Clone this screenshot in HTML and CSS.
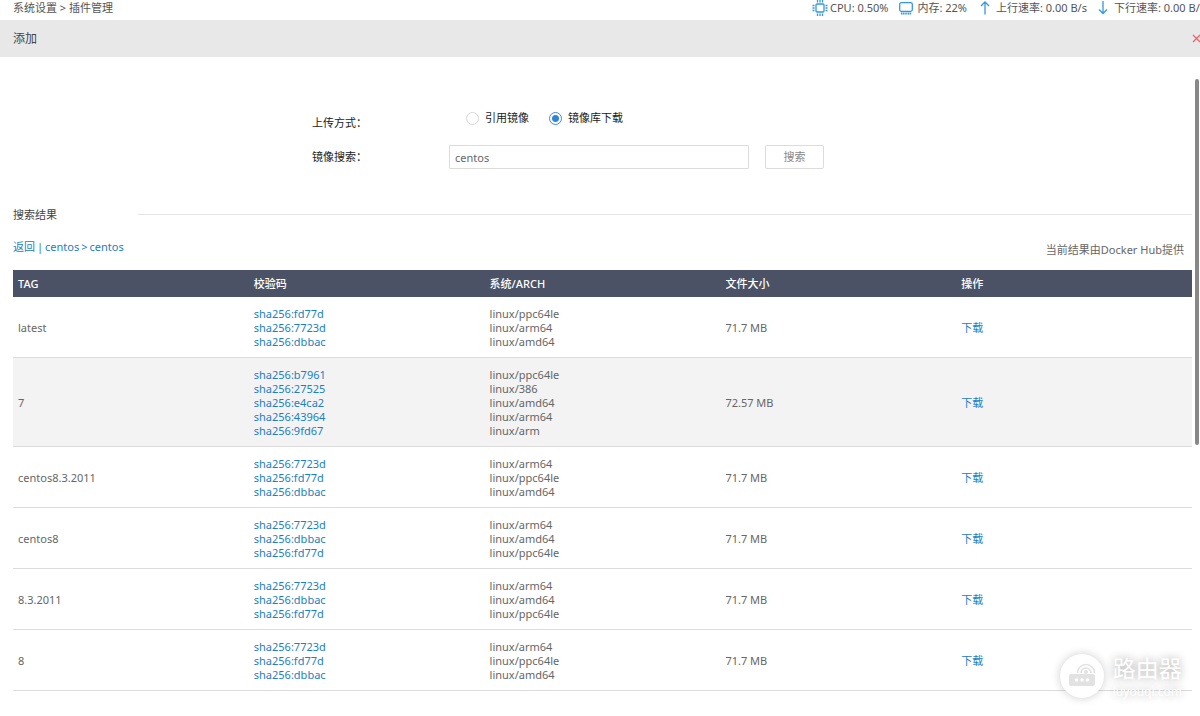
FILE: index.html
```html
<!DOCTYPE html>
<html lang="zh-CN">
<head>
<meta charset="utf-8">
<title>插件管理</title>
<link rel="stylesheet" href="styles.css">
</head>
<body>
<header class="topbar">
  <nav class="crumbs">系统设置 &gt; 插件管理</nav>
  <ul class="status">
    <li class="stat stat-cpu"><svg width="16" height="16" viewBox="0 0 16 16"><rect x="4" y="4" width="8" height="8" rx="1"/><path d="M5.500 0v2.500M8 0v2.500M10.500 0v2.500M5.500 13.500v2.500M8 13.500v2.500M10.500 13.500v2.500M0.500 5.500h2M0.500 8h2M0.500 10.500h2M13.500 5.500h2M13.500 8h2M13.500 10.500h2"/></svg>CPU: 0.50%</li>
    <li class="stat stat-mem"><svg width="14" height="14" viewBox="0 0 14 14"><rect x="0.700" y="1.700" width="12.600" height="8.600" rx="1.500"/><path d="M2.500 11.500v2M4.300 11.500v2M6.100 11.500v2M7.900 11.500v2M9.700 11.500v2M11.500 11.500v2"/></svg>内存: 22%</li>
    <li class="stat stat-up"><svg width="10" height="14" viewBox="0 0 10 14"><path d="M5 13.500V1M1 5l4-4 4 4"/></svg>上行速率: 0.00 B/s</li>
    <li class="stat stat-down"><svg width="10" height="14" viewBox="0 0 10 14"><path d="M5 0v12.500M1 8.500l4 4 4-4"/></svg>下行速率: 0.00 B/s</li>
  </ul>
</header>
<div class="titlebar">
  <h1 class="title">添加</h1>
  <button class="close" type="button" aria-label="关闭"><svg width="9" height="9" viewBox="0 0 9 9"><path d="M1 1l7 7M8 1l-7 7"/></svg></button>
</div>
<main class="panel">
  <form class="form">
    <div class="field" role="radiogroup" aria-labelledby="mode">
      <span class="label" id="mode">上传方式：</span>
      <div class="radios">
        <label class="choice"><input type="radio" name="mode">引用镜像</label>
        <label class="choice"><input type="radio" name="mode" checked>镜像库下载</label>
      </div>
    </div>
    <div class="field">
      <label class="label" for="q">镜像搜索：</label>
      <input class="text" id="q" type="text" value="centos">
      <button class="search" type="button">搜索</button>
    </div>
  </form>
  <div class="section"><h2 class="section-title">搜索结果</h2><div class="rule"></div></div>
  <div class="path">
    <div class="path-links"><a href="#">返回</a><span>|</span><a href="#">centos</a><span>&gt;</span><a href="#">centos</a></div>
    <div class="source">当前结果由Docker Hub提供</div>
  </div>
  <table class="tags">
    <thead><tr><th>TAG</th><th>校验码</th><th>系统/ARCH</th><th>文件大小</th><th>操作</th></tr></thead>
    <tbody>
      <tr><td>latest</td><td><a href="#">sha256:fd77d</a><a href="#">sha256:7723d</a><a href="#">sha256:dbbac</a></td><td>linux/ppc64le<br>linux/arm64<br>linux/amd64</td><td>71.7 MB</td><td><a href="#">下载</a></td></tr>
      <tr class="active"><td>7</td><td><a href="#">sha256:b7961</a><a href="#">sha256:27525</a><a href="#">sha256:e4ca2</a><a href="#">sha256:43964</a><a href="#">sha256:9fd67</a></td><td>linux/ppc64le<br>linux/386<br>linux/amd64<br>linux/arm64<br>linux/arm</td><td>72.57 MB</td><td><a href="#">下载</a></td></tr>
      <tr><td>centos8.3.2011</td><td><a href="#">sha256:7723d</a><a href="#">sha256:fd77d</a><a href="#">sha256:dbbac</a></td><td>linux/arm64<br>linux/ppc64le<br>linux/amd64</td><td>71.7 MB</td><td><a href="#">下载</a></td></tr>
      <tr><td>centos8</td><td><a href="#">sha256:7723d</a><a href="#">sha256:dbbac</a><a href="#">sha256:fd77d</a></td><td>linux/arm64<br>linux/amd64<br>linux/ppc64le</td><td>71.7 MB</td><td><a href="#">下载</a></td></tr>
      <tr><td>8.3.2011</td><td><a href="#">sha256:7723d</a><a href="#">sha256:dbbac</a><a href="#">sha256:fd77d</a></td><td>linux/arm64<br>linux/amd64<br>linux/ppc64le</td><td>71.7 MB</td><td><a href="#">下载</a></td></tr>
      <tr><td>8</td><td><a href="#">sha256:7723d</a><a href="#">sha256:fd77d</a><a href="#">sha256:dbbac</a></td><td>linux/arm64<br>linux/ppc64le<br>linux/amd64</td><td>71.7 MB</td><td><a href="#">下载</a></td></tr>
    </tbody>
  </table>
  <div class="thumb"></div>
</main>
<div class="mark">
  <div class="mark-disc"><svg width="28" height="26" viewBox="0 0 28 26"><rect class="box" x="1" y="11" width="26" height="12" rx="2"/><path class="wave" d="M9.500 10a8.500 8.500 0 0 1 17 0M13 10a5 5 0 0 1 10 0"/><circle class="box" cx="18" cy="9" r="2"/><circle class="dot" cx="8.500" cy="17" r="1.800"/><circle class="dot" cx="14" cy="17" r="1.800"/><circle class="dot" cx="19.500" cy="17" r="1.800"/></svg></div>
  <div class="mark-text"><div class="mark-name">路由器</div><div class="mark-url">luyouqi.com</div></div>
</div>
</body>
</html>
```

FILE: styles.css
```css
* { box-sizing: border-box; }
body {
  margin: 0;
  min-height: 100vh;
  position: relative;
  overflow: hidden;
  background: #fff;
  color: #666;
  font: 11px/14px "Noto Sans", "Noto Sans CJK SC", sans-serif;
}
a { color: #1a80c4; text-decoration: none; }
button, input { font: inherit; }
.topbar {
  display: flex;
  align-items: flex-start;
  justify-content: space-between;
  height: 20px;
  padding-left: 13px;
  white-space: nowrap;
}
.crumbs { padding-top: 1px; color: #555; }
.status { display: flex; margin: 0 -5px 0 0; padding: 0; list-style: none; color: #555; }
.stat { display: flex; align-items: center; height: 15px; margin-left: 11px; gap: 4px; }
.stat svg { fill: none; stroke: #3498db; stroke-width: 1.3; }
.stat-cpu { gap: 2px; }
.stat-up, .stat-down { gap: 6px; }
.stat-up { margin-left: 13px; }
.titlebar {
  display: flex;
  align-items: center;
  justify-content: space-between;
  height: 37px;
  padding-left: 13px;
  background: #e8e8e8;
}
.title { margin: 0; font-size: 12px; line-height: 16px; font-weight: 400; color: #444; }
.close { display: flex; margin-right: -1px; padding: 0; border: 0; background: none; }
.close svg { stroke: #f0646c; stroke-width: 1.4; }
.panel { position: relative; padding: 50px 8px 0 13px; }
.form { padding-left: 299px; }
.field { display: flex; height: 24px; margin-bottom: 14px; color: #333; align-items: flex-end; }
.field + .field { margin-bottom: 0; align-items: center; }
.label { width: 137px; line-height: 16px; color: #222; }
.radios { display: flex; gap: 20px; padding-left: 17px; align-self: flex-start; }
.choice { display: flex; align-items: center; gap: 6px; height: 22px; color: #222; }
.choice input {
  appearance: none;
  width: 13px;
  height: 13px;
  margin: 0;
  border: 1px solid #d8d8d8;
  border-radius: 50%;
  background: #fff;
}
.choice input:checked {
  border-color: #3a8ee0;
  background: radial-gradient(circle, #2f83d8 0 3px, #fff 4px);
}
.text {
  width: 300px;
  height: 24px;
  margin-right: 16px;
  padding: 0 5px;
  border: 1px solid #dcdcdc;
  border-radius: 1px;
  color: #666;
}
.search {
  width: 59px;
  height: 24px;
  padding: 0;
  border: 1px solid #dcdcdc;
  border-radius: 2px;
  background: #fff;
  color: #888;
}
.section { display: flex; align-items: center; margin-top: 38px; }
.section-title { width: 125px; margin: 0; padding-top: 1px; font-size: 11px; font-weight: 400; color: #444; }
.rule { flex: 1; height: 1px; background: #e4e4e4; }
.path { display: flex; justify-content: space-between; height: 48px; padding: 18px 8px 0 0; color: #1a80c4; }
.path-links { display: flex; gap: 2px; }
.source { padding-top: 3px; color: #666; }
.tags { width: 100%; table-layout: fixed; border-collapse: separate; border-spacing: 0; }
.tags th { height: 27px; padding: 0 5px; background: #4c5266; color: #fff; font-weight: 500; text-align: left; }
.tags td { padding: 10px 5px 8px; border-bottom: 1px solid #dcdcdc; vertical-align: middle; }
.tags td a { display: block; }
.active td { background: #f3f3f3; }
.thumb {
  position: absolute;
  top: 22px;
  right: 1px;
  width: 4px;
  height: 366px;
  border-radius: 2px;
  background: #888;
}
.mark { position: absolute; right: 18px; bottom: 16px; display: flex; align-items: center; gap: 9px; color: #fff; }
.mark-disc {
  display: flex;
  align-items: center;
  justify-content: center;
  width: 44px;
  height: 44px;
  border-radius: 50%;
  background: #fff;
  box-shadow: 0 0 10px rgba(0, 0, 0, 0.2);
}
.box { fill: #e2e2e2; }
.wave { fill: none; stroke: #e2e2e2; stroke-width: 1.6; }
.dot { fill: #fff; }
.mark-text { text-shadow: 0 0 8px rgba(0, 0, 0, 0.2), 0 0 12px rgba(0, 0, 0, 0.2); }
.mark-name { font-size: 23px; line-height: 32px; }
.mark-url { font-size: 12px; line-height: 16px; }
```
